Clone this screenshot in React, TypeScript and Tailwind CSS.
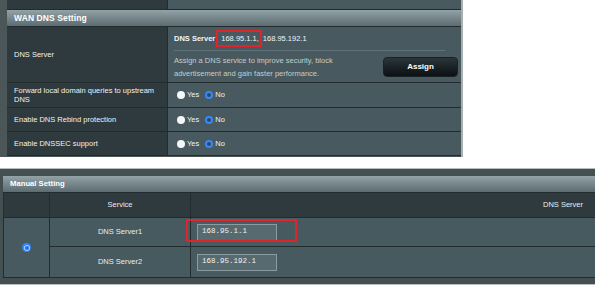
import React from "react";

const FONT = { fontFamily: '"Liberation Sans", Arial, sans-serif' };
const MONO = { fontFamily: '"Liberation Mono", "Courier New", monospace' };

function Radio({ checked }: { checked: boolean }) {
  if (checked) {
    return (
      <span className="inline-block w-[8px] h-[8px] rounded-full border-2 border-[#3389ff] bg-[#34465a] shrink-0" />
    );
  }
  return <span className="inline-block w-[8px] h-[8px] rounded-full bg-[#f4f6f7] shrink-0" />;
}

function YesNo() {
  return (
    <div className="flex items-center pl-[9px] text-[7.5px] text-[#eef2f3]">
      <Radio checked={false} />
      <span className="ml-[2px]">Yes</span>
      <span className="ml-[6px] flex items-center">
        <Radio checked />
        <span className="ml-[2px]">No</span>
      </span>
    </div>
  );
}

function Row({
  label,
  height,
  children,
}: {
  label: React.ReactNode;
  height: string;
  children: React.ReactNode;
}) {
  return (
    <div className={`flex border-b border-[#222b2e] ${height}`}>
      <div className="w-[160px] shrink-0 bg-[#2e3a3d] flex items-center pl-[7px] pr-2 text-[7.5px] leading-[9px] text-[#eef2f3]">
        {label}
      </div>
      <div className="flex-1 bg-[#485a5f] border-l border-[#222b2e] flex flex-col justify-center">
        {children}
      </div>
    </div>
  );
}

export default function App() {
  return (
    <div className="w-[605px] h-[300px] bg-white overflow-hidden flex flex-col" style={FONT}>
      {/* WAN DNS Setting */}
      <div className="w-[463px] h-[157px] bg-[#4b5659] pl-[7px] border-r-2 border-[#a7afb1] flex flex-col">
        <div className="h-[10px] flex border-b border-[#222b2e]">
          <div className="w-[160px] bg-[#2e3a3d]" />
          <div className="flex-1 bg-[#485a5f] border-l border-[#222b2e]" />
        </div>
        <div className="h-[17px] bg-gradient-to-b from-[#93a2a6] to-[#5d6c70] border-b border-[#222b2e] flex items-center pl-[7px] text-[8.5px] font-bold text-white tracking-[0.1px]">
          WAN DNS Setting
        </div>
        <Row label="DNS Server" height="h-[56px]">
          <div className="h-full flex flex-col">
            <div className="h-[23px] flex items-center pl-[6px] text-[7.5px] text-[#f2f5f6]">
              <span className="font-bold">DNS Server</span>
              <span className="ml-[1px] h-[17px] flex items-center border-2 border-[#e0242c] pl-[3px] pr-[1px]">
                168.95.1.1,
              </span>
              <span className="ml-[1px]">168.95.192.1</span>
            </div>
            <div className="ml-[6px] mr-[16px] border-t border-[#60727a]" />
            <div className="flex-1 flex items-center justify-between pl-[6px] pr-[3px]">
              <div className="text-[7.5px] leading-[13px] text-[#c3ccce]">
                <div>Assign a DNS service to improve security, block</div>
                <div>advertisement and gain faster performance.</div>
              </div>
              <button className="w-[75px] h-[20px] rounded-[4px] bg-gradient-to-b from-[#2b363a] to-[#0c1113] border border-[#1a2124] text-white font-bold text-[8px]">
                Assign
              </button>
            </div>
          </div>
        </Row>
        <Row
          label={
            <span>
              Forward local domain queries to upstream
              <br />
              DNS
            </span>
          }
          height="h-[25px]"
        >
          <YesNo />
        </Row>
        <Row label="Enable DNS Rebind protection" height="h-[24px]">
          <YesNo />
        </Row>
        <Row label="Enable DNSSEC support" height="h-[24px]">
          <YesNo />
        </Row>
      </div>

      <div className="h-[11px]" />

      {/* Manual Setting */}
      <div className="w-[595px] h-[117px] bg-[#444f52] border-t border-[#9aa3a5] border-b border-[#b7bec0] pt-[7px] pl-[3px] flex flex-col">
        <div className="h-[17px] bg-gradient-to-b from-[#93a2a6] to-[#5d6c70] border-b border-[#222b2e] flex items-center pl-[7px] text-[7.7px] font-bold text-white">
          Manual Setting
        </div>
        <div className="grid grid-cols-[46px_141px_1fr] grid-rows-[25px_29px_30px] text-[7.5px] text-[#eaeef0] border-l border-[#222b2e] border-b">
          <div className="bg-[#2e3a3d] border-r border-b border-[#222b2e]" />
          <div className="bg-[#2e3a3d] border-r border-b border-[#222b2e] flex items-center justify-center">
            Service
          </div>
          <div className="bg-[#2e3a3d] border-b border-[#222b2e] flex items-center pl-[352px] whitespace-nowrap">
            DNS Server
          </div>
          <div className="row-span-2 bg-[#475a5f] border-r border-[#222b2e] flex items-center justify-center">
            <span className="w-[9px] h-[9px] rounded-full bg-[#2f86ff] flex items-center justify-center">
              <span className="w-[6px] h-[6px] rounded-full bg-[#a9cdff] flex items-center justify-center">
                <span className="w-[4px] h-[4px] rounded-full bg-[#1f6ff0]" />
              </span>
            </span>
          </div>
          <div className="bg-[#475a5f] border-r border-b border-[#222b2e] flex items-center justify-center">
            DNS Server1
          </div>
          <div className="relative bg-[#475a5f] border-b border-[#222b2e] flex items-center pl-[6px]">
            <div
              className="w-[80px] h-[17px] bg-[#576a6f] border border-[#8b9ca0] flex items-center pl-[4px] text-[7.5px] text-[#eef3f4]"
              style={MONO}
            >
              168.95.1.1
            </div>
            <div className="absolute z-10 left-[-5px] top-[1px] w-[111px] h-[23px] border-2 border-[#e0242c]" />
          </div>
          <div className="bg-[#475a5f] border-r border-[#222b2e] flex items-center justify-center">
            DNS Server2
          </div>
          <div className="bg-[#475a5f] flex items-center pl-[6px]">
            <div
              className="w-[80px] h-[17px] bg-[#576a6f] border border-[#8b9ca0] flex items-center pl-[4px] text-[7.5px] text-[#eef3f4]"
              style={MONO}
            >
              168.95.192.1
            </div>
          </div>
        </div>
      </div>
    </div>
  );
}
